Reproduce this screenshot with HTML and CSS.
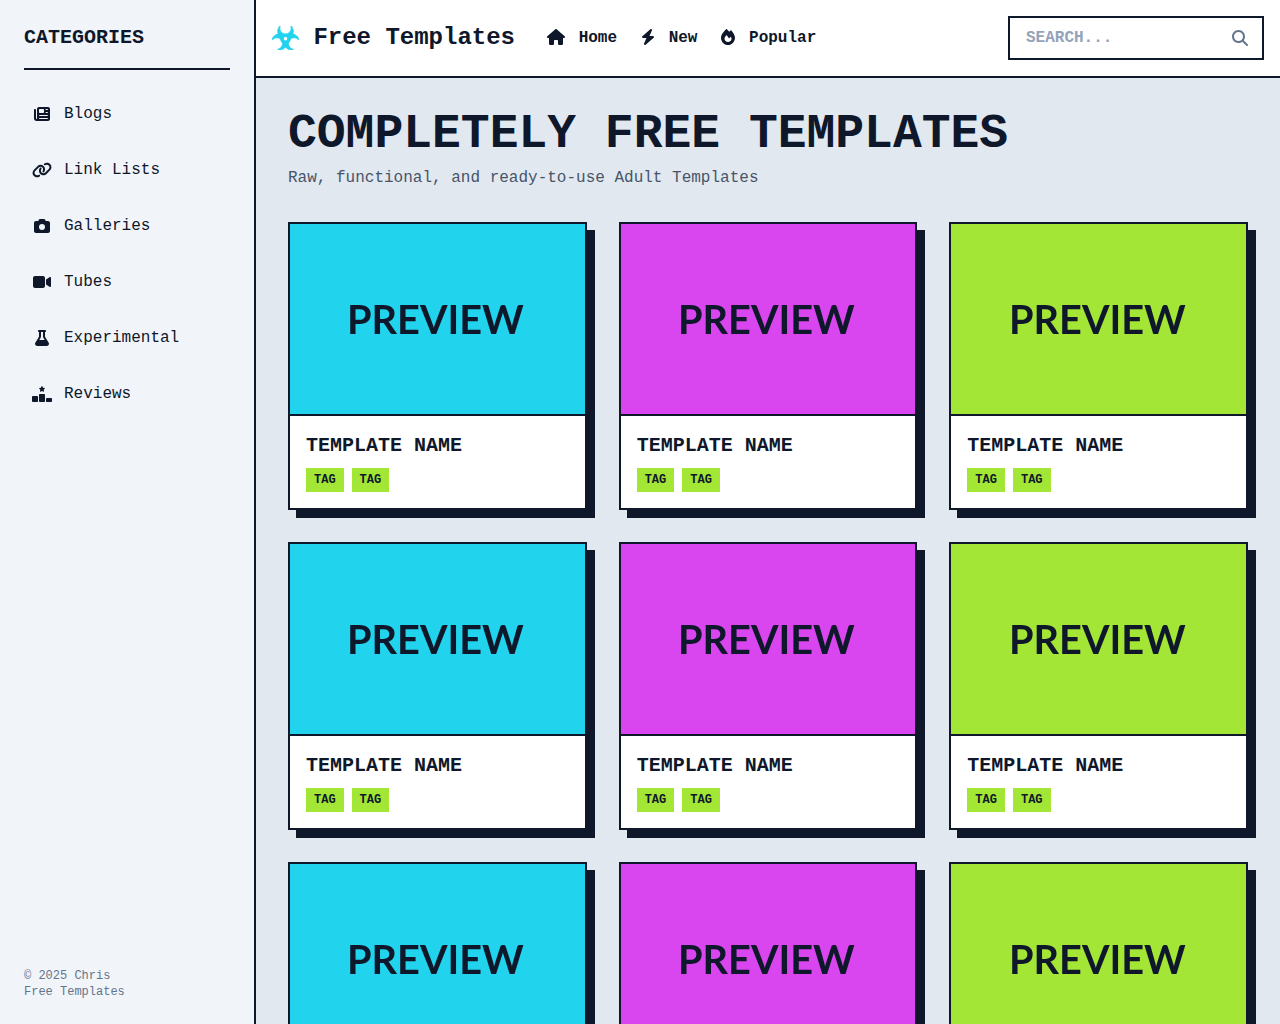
FILE: index.html
```html
<!DOCTYPE html>
<html lang="en">
<head>
<meta charset="utf-8">
<title>Free Templates</title>
<link rel="stylesheet" href="styles.css">
</head>
<body>
<svg class="defs" aria-hidden="true">
  <symbol id="i-news" viewBox="0 0 512 512"><path d="M96 96c0-35.3 28.7-64 64-64H448c35.3 0 64 28.7 64 64V416c0 35.3-28.7 64-64 64H80c-44.2 0-80-35.8-80-80V128c0-17.7 14.3-32 32-32s32 14.3 32 32V400c0 8.8 7.2 16 16 16s16-7.2 16-16V96zm64 24v80c0 13.3 10.7 24 24 24H296c13.3 0 24-10.7 24-24V120c0-13.3-10.7-24-24-24H184c-13.3 0-24 10.7-24 24zm208-8c0 8.8 7.2 16 16 16h48c8.8 0 16-7.2 16-16s-7.2-16-16-16H384c-8.8 0-16 7.2-16 16zm0 96c0 8.8 7.2 16 16 16h48c8.8 0 16-7.2 16-16s-7.2-16-16-16H384c-8.8 0-16 7.2-16 16zM160 304c0 8.8 7.2 16 16 16H432c8.8 0 16-7.2 16-16s-7.2-16-16-16H176c-8.8 0-16 7.2-16 16zm0 96c0 8.8 7.2 16 16 16H432c8.8 0 16-7.2 16-16s-7.2-16-16-16H176c-8.8 0-16 7.2-16 16z"/></symbol>
  <symbol id="i-link" viewBox="0 0 640 512"><path d="M579.8 267.7c56.5-56.5 56.5-148 0-204.5c-50-50-128.8-56.5-186.3-15.4l-1.6 1.1c-14.4 10.3-17.7 30.3-7.4 44.6s30.3 17.7 44.6 7.4l1.6-1.1c32.1-22.9 76-19.3 103.8 8.6c31.5 31.5 31.5 82.5 0 114L422.3 334.8c-31.5 31.5-82.5 31.5-114 0c-27.9-27.9-31.5-71.8-8.6-103.8l1.1-1.6c10.3-14.4 6.9-34.4-7.4-44.6s-34.4-6.9-44.6 7.4l-1.1 1.6C206.5 251.2 213 330 263 380c56.5 56.5 148 56.5 204.5 0L579.8 267.7zM60.2 244.3c-56.5 56.5-56.5 148 0 204.5c50 50 128.8 56.5 186.3 15.4l1.6-1.1c14.4-10.3 17.7-30.3 7.4-44.6s-30.3-17.7-44.6-7.4l-1.6 1.1c-32.1 22.9-76 19.3-103.8-8.6C74 372 74 321 105.5 289.5L217.7 177.2c31.5-31.5 82.5-31.5 114 0c27.9 27.9 31.5 71.8 8.6 103.9l-1.1 1.6c-10.3 14.4-6.9 34.4 7.4 44.6s34.4 6.9 44.6-7.4l1.1-1.6C433.5 260.8 427 182 377 132c-56.5-56.5-148-56.5-204.5 0L60.2 244.3z"/></symbol>
  <symbol id="i-camera" viewBox="0 0 512 512"><path d="M149.1 64.8L138.7 96H64C28.7 96 0 124.7 0 160V416c0 35.3 28.7 64 64 64H448c35.3 0 64-28.7 64-64V160c0-35.3-28.7-64-64-64H373.3L362.9 64.8C356.4 45.2 338.1 32 317.4 32H194.6c-20.7 0-39 13.2-45.5 32.8zM256 192a96 96 0 1 1 0 192 96 96 0 1 1 0-192z"/></symbol>
  <symbol id="i-video" viewBox="0 0 576 512"><path d="M0 128C0 92.7 28.7 64 64 64H320c35.3 0 64 28.7 64 64V384c0 35.3-28.7 64-64 64H64c-35.3 0-64-28.7-64-64V128zM559.1 99.8c10.4 5.6 16.9 16.4 16.9 28.2V384c0 11.8-6.5 22.6-16.9 28.2s-23 5-32.9-1.6l-96-64L416 337.1V320 192 174.9l14.2-9.5 96-64c9.8-6.5 22.4-7.2 32.9-1.6z"/></symbol>
  <symbol id="i-flask" viewBox="0 0 448 512"><path d="M288 0H160 128C110.3 0 96 14.3 96 32s14.3 32 32 32V196.8c0 11.8-3.3 23.5-9.5 33.5L10.3 406.2C3.6 417.2 0 429.7 0 442.6C0 480.9 31.1 512 69.4 512H378.6c38.3 0 69.4-31.1 69.4-69.4c0-12.8-3.6-25.4-10.3-36.4L329.5 230.4c-6.2-10.1-9.5-21.7-9.5-33.5V64c17.7 0 32-14.3 32-32s-14.3-32-32-32H288zM192 196.8V64h64V196.8c0 23.7 6.6 46.9 19 67.1L309.5 320h-171L173 263.9c12.4-20.2 19-43.4 19-67.1z"/></symbol>
  <symbol id="i-rank" viewBox="0 0 640 512"><path d="M353.8 54.1L330.2 6.3c-3.9-8.3-16.1-8.6-20.4 0L286.2 54.1l-52.3 7.5c-9.3 1.4-13.3 12.9-6.4 19.8l38 37-9 52.1c-1.4 9.3 8.2 16.5 16.8 12.2l46.9-24.8 46.6 24.4c8.6 4.3 18.3-2.9 16.8-12.2l-9-52.1 38-36.6c6.8-6.8 2.9-18.3-6.4-19.8l-52.3-7.5zM256 256c-17.7 0-32 14.3-32 32V480c0 17.7 14.3 32 32 32H384c17.7 0 32-14.3 32-32V288c0-17.7-14.3-32-32-32H256zM32 320c-17.7 0-32 14.3-32 32V480c0 17.7 14.3 32 32 32H160c17.7 0 32-14.3 32-32V352c0-17.7-14.3-32-32-32H32zm416 96v64c0 17.7 14.3 32 32 32H608c17.7 0 32-14.3 32-32V416c0-17.7-14.3-32-32-32H480c-17.7 0-32 14.3-32 32z"/></symbol>
  <symbol id="i-bio" viewBox="0 0 576 512"><path d="M501.300 191.100c-17.600-10.400-36.300-16.600-55.300-19.900 6-17.700 10-36.400 10-56.200 0-41-14.500-80.800-41-112.200-2.500-3-6.600-3.700-10-1.800-3.300 1.900-4.800 6-3.600 9.700 4.500 13.800 6.600 26.300 6.600 38.500 0 67.800-53.800 122.900-120 122.900S168 117 168 49.200c0-12.100 2.200-24.700 6.600-38.500 1.200-3.700-.3-7.800-3.600-9.700-3.400-1.900-7.500-1.200-10 1.800C134.600 34.200 120 74 120 115c0 19.800 3.900 38.500 10 56.200-18.900 3.300-37.700 9.500-55.300 19.900-34.600 20.500-61 53.300-74.300 92.400-1.300 3.700.2 7.700 3.500 9.800 3.300 2 7.500 1.300 10-1.600 9.400-10.800 19-19.100 29.200-25.100 57.300-33.900 130.800-13.700 163.900 45 33.100 58.700 13.400 134-43.900 167.900-10.200 6.100-22 10.400-35.800 13.400-3.700.8-6.400 4.200-6.400 8.100.1 3.900 2.700 7.300 6.500 8 39.700 7.800 80.600.8 115.200-19.700 18-10.600 32.900-24.500 45.300-40.100 12.400 15.600 27.300 29.500 45.300 40.100 34.600 20.500 75.500 27.500 115.200 19.700 3.800-.7 6.400-4.100 6.500-8 0-3.900-2.600-7.300-6.400-8.100-13.900-2.900-25.600-7.300-35.800-13.400-57.300-33.900-77-109.200-43.900-167.900s106.600-78.900 163.900-45c10.200 6.100 19.800 14.300 29.200 25.100 2.500 2.900 6.700 3.600 10 1.600s4.800-6.100 3.500-9.800c-13.100-39.100-39.500-72-74.100-92.400zm-213.400 129c-26.500 0-48-21.500-48-48s21.500-48 48-48 48 21.500 48 48-21.500 48-48 48z"/><circle class="bio-hub" cx="288" cy="272" r="78"/></symbol>
  <symbol id="i-house" viewBox="0 0 576 512"><path d="M575.8 255.5c0 18-15 32.1-32 32.1h-32l.7 160.2c0 2.7-.2 5.4-.5 8.1V472c0 22.1-17.9 40-40 40H456c-1.1 0-2.2 0-3.3-.1c-1.4 .1-2.8 .1-4.2 .1H416 392c-22.1 0-40-17.9-40-40V448 384c0-17.7-14.3-32-32-32H256c-17.7 0-32 14.3-32 32v64 24c0 22.1-17.9 40-40 40H160 128.1c-1.5 0-3-.1-4.5-.2c-1.2 .1-2.4 .2-3.6 .2H104c-22.1 0-40-17.9-40-40V360c0-.9 0-1.9 .1-2.8V287.6H32c-18 0-32-14-32-32.1c0-9 3-17 10-24L266.4 8c7-7 15-8 22-8s15 2 21 7L564.8 231.5c8 7 12 15 11 24z"/></symbol>
  <symbol id="i-bolt" viewBox="0 0 448 512"><path d="M349.4 44.6c5.9-13.7 1.5-29.7-10.6-38.5s-28.6-8-39.9 1.8l-256 224c-10 8.8-13.6 22.9-8.9 35.3S50.7 288 64 288H175.5L98.6 467.4c-5.9 13.7-1.5 29.7 10.6 38.5s28.6 8 39.9-1.8l256-224c10-8.8 13.6-22.9 8.9-35.3s-16.6-20.7-30-20.7H272.5L349.4 44.6z"/></symbol>
  <symbol id="i-fire" viewBox="0 0 448 512"><path d="M159.3 5.4c7.8-7.3 19.9-7.3 27.7 .1c27.6 25.9 53.5 53.8 77.7 84c11-14.4 23.5-30.1 37-42.9c7.9-7.4 20.1-7.4 28 .1c34.6 33 63.9 76.6 84.5 118c20.3 40.8 33.8 82.5 33.8 111.9C448 404.2 348.2 512 224 512C98.4 512 0 404.1 0 276.5c0-38.4 17.8-85.3 45.4-131.7C73.3 97.7 112.7 48.6 159.3 5.4zM225.7 416c25.3 0 47.7-7 68.8-21c42.1-29.4 53.4-88.2 28.1-134.4c-4.5-9-16-9.6-22.5-2l-25.2 29.3c-6.6 7.6-18.5 7.4-24.7-.5c-16.5-21-46-58.5-62.8-79.8c-6.3-8-18.3-8.1-24.7-.1c-33.8 42.5-50.8 69.3-50.8 99.4C112 375.4 162.6 416 225.7 416z"/></symbol>
  <symbol id="i-search" viewBox="0 0 512 512"><path d="M416 208c0 45.9-14.9 88.3-40 122.7L502.6 457.4c12.5 12.5 12.5 32.8 0 45.3s-32.8 12.5-45.3 0L330.7 376c-34.4 25.2-76.8 40-122.7 40C93.1 416 0 322.9 0 208S93.1 0 208 0S416 93.1 416 208zM208 352a144 144 0 1 0 0-288 144 144 0 1 0 0 288z"/></symbol>
</svg>
<div class="app">
  <aside class="sidebar">
    <h2 class="side-title">CATEGORIES</h2>
    <nav class="side-nav">
      <a class="side-link" href="#"><span class="side-icon"><svg class="ic ic-512"><use href="#i-news"/></svg></span>Blogs</a>
      <a class="side-link" href="#"><span class="side-icon"><svg class="ic ic-640"><use href="#i-link"/></svg></span>Link Lists</a>
      <a class="side-link" href="#"><span class="side-icon"><svg class="ic ic-512"><use href="#i-camera"/></svg></span>Galleries</a>
      <a class="side-link" href="#"><span class="side-icon"><svg class="ic ic-576"><use href="#i-video"/></svg></span>Tubes</a>
      <a class="side-link" href="#"><span class="side-icon"><svg class="ic ic-448"><use href="#i-flask"/></svg></span>Experimental</a>
      <a class="side-link" href="#"><span class="side-icon"><svg class="ic ic-640"><use href="#i-rank"/></svg></span>Reviews</a>
    </nav>
    <footer class="side-foot">© 2025 Chris<br>Free Templates</footer>
  </aside>
  <div class="main">
    <header class="topbar">
      <a class="logo" href="#"><svg class="logo-icon"><use href="#i-bio"/></svg>Free Templates</a>
      <nav class="top-nav">
        <a class="top-link" href="#"><svg class="ic ic-576"><use href="#i-house"/></svg>Home</a>
        <a class="top-link" href="#"><svg class="ic ic-448"><use href="#i-bolt"/></svg>New</a>
        <a class="top-link" href="#"><svg class="ic ic-448"><use href="#i-fire"/></svg>Popular</a>
      </nav>
      <form class="search">
        <input class="search-input" type="text" placeholder="SEARCH...">
        <svg class="ic ic-512 search-icon"><use href="#i-search"/></svg>
      </form>
    </header>
    <main class="content">
      <h1 class="page-title">COMPLETELY FREE TEMPLATES</h1>
      <p class="page-sub">Raw, functional, and ready-to-use Adult Templates</p>
      <section class="grid">
        <article class="card"><div class="preview cyan"><span class="preview-text">PREVIEW</span></div><div class="card-body"><h3 class="card-name">TEMPLATE NAME</h3><div class="tags"><span class="tag">TAG</span><span class="tag">TAG</span></div></div></article>
        <article class="card"><div class="preview magenta"><span class="preview-text">PREVIEW</span></div><div class="card-body"><h3 class="card-name">TEMPLATE NAME</h3><div class="tags"><span class="tag">TAG</span><span class="tag">TAG</span></div></div></article>
        <article class="card"><div class="preview lime"><span class="preview-text">PREVIEW</span></div><div class="card-body"><h3 class="card-name">TEMPLATE NAME</h3><div class="tags"><span class="tag">TAG</span><span class="tag">TAG</span></div></div></article>
        <article class="card"><div class="preview cyan"><span class="preview-text">PREVIEW</span></div><div class="card-body"><h3 class="card-name">TEMPLATE NAME</h3><div class="tags"><span class="tag">TAG</span><span class="tag">TAG</span></div></div></article>
        <article class="card"><div class="preview magenta"><span class="preview-text">PREVIEW</span></div><div class="card-body"><h3 class="card-name">TEMPLATE NAME</h3><div class="tags"><span class="tag">TAG</span><span class="tag">TAG</span></div></div></article>
        <article class="card"><div class="preview lime"><span class="preview-text">PREVIEW</span></div><div class="card-body"><h3 class="card-name">TEMPLATE NAME</h3><div class="tags"><span class="tag">TAG</span><span class="tag">TAG</span></div></div></article>
        <article class="card"><div class="preview cyan"><span class="preview-text">PREVIEW</span></div><div class="card-body"><h3 class="card-name">TEMPLATE NAME</h3><div class="tags"><span class="tag">TAG</span><span class="tag">TAG</span></div></div></article>
        <article class="card"><div class="preview magenta"><span class="preview-text">PREVIEW</span></div><div class="card-body"><h3 class="card-name">TEMPLATE NAME</h3><div class="tags"><span class="tag">TAG</span><span class="tag">TAG</span></div></div></article>
        <article class="card"><div class="preview lime"><span class="preview-text">PREVIEW</span></div><div class="card-body"><h3 class="card-name">TEMPLATE NAME</h3><div class="tags"><span class="tag">TAG</span><span class="tag">TAG</span></div></div></article>
      </section>
    </main>
  </div>
</div>
</body>
</html>
```

FILE: styles.css
```css
* { box-sizing: border-box; }
html, body { margin: 0; height: 100%; overflow: hidden; }
body { font-family: "Liberation Mono", monospace; color: #0f172a; background: #e2e8f0; }
a { color: inherit; text-decoration: none; }
.defs { display: none; }
.app { display: flex; height: 100vh; }

.ic { display: block; height: 16px; fill: currentColor; flex: none; }
.ic-448 { width: 14px; }
.ic-512 { width: 16px; }
.ic-576 { width: 18px; }
.ic-640 { width: 20px; }

.sidebar { width: 256px; flex: none; display: flex; flex-direction: column; padding: 24px; background: #f1f5f9; border-right: 2px solid #0f172a; }
.side-title { margin: 0 0 20px; padding-bottom: 16px; font-size: 20px; line-height: 28px; font-weight: 700; border-bottom: 2px solid #0f172a; }
.side-nav { display: flex; flex-direction: column; gap: 8px; }
.side-link { display: flex; align-items: center; gap: 12px; padding: 12px 8px; font-size: 16px; line-height: 24px; }
.side-icon { width: 20px; display: flex; justify-content: center; flex: none; }
.side-foot { margin-top: auto; font-size: 12px; line-height: 16px; color: #64748b; }

.main { flex: 1; min-width: 0; display: flex; flex-direction: column; }
.topbar { height: 78px; flex: none; display: flex; align-items: center; padding: 0 16px; background: #fff; border-bottom: 2px solid #0f172a; }
.logo { display: flex; align-items: center; gap: 14.4px; font-size: 24px; line-height: 32px; font-weight: 700; }
.logo-icon { display: block; width: 27px; height: 24px; fill: #22d3ee; stroke: #22d3ee; stroke-width: 14; flex: none; overflow: visible; }
.bio-hub { fill: none; stroke: #22d3ee; stroke-width: 70; }
.top-nav { display: flex; gap: 24px; margin-left: 32px; }
.top-link { display: flex; align-items: center; gap: 13.6px; font-size: 16px; line-height: 24px; font-weight: 700; }
.top-link .ic { margin-bottom: 2px; }
.search { margin-left: auto; width: 256px; height: 44px; display: flex; align-items: center; padding: 0 14px 0 16px; background: #fff; border: 2px solid #0f172a; }
.search-input { flex: 1; min-width: 0; padding: 0; border: 0; outline: 0; background: transparent; font: 700 16px/24px "Liberation Mono", monospace; color: #0f172a; }
.search-input::placeholder { color: #94a3b8; opacity: 1; }
.search-icon { color: #64748b; }

.content { flex: 1; min-height: 0; overflow: hidden; padding: 32px; }
.page-title { margin: 0 0 8px; font-size: 48px; line-height: 48px; font-weight: 700; }
.page-sub { margin: 0 0 32px; font-size: 16px; line-height: 24px; color: #475569; }
.grid { display: grid; grid-template-columns: repeat(3, minmax(0, 1fr)); gap: 32px; }
.card { background: #fff; border: 2px solid #0f172a; box-shadow: 8px 8px 0 #0f172a; }
.preview { height: 192px; display: flex; align-items: center; justify-content: center; padding: 0 3px 2px 0; border-bottom: 2px solid #0f172a; }
.preview-text { font-family: Lato, sans-serif; font-size: 39.7px; font-weight: 700; will-change: transform; }
.cyan { background: #22d3ee; }
.magenta { background: #d946ef; }
.lime { background: #a3e635; }
.card-body { padding: 16px; }
.card-name { margin: 0 0 8px; font-size: 20px; line-height: 28px; font-weight: 700; }
.tags { display: flex; gap: 8px; }
.tag { padding: 4px 8px; font-size: 12px; line-height: 16px; font-weight: 700; background: #a3e635; }
```
